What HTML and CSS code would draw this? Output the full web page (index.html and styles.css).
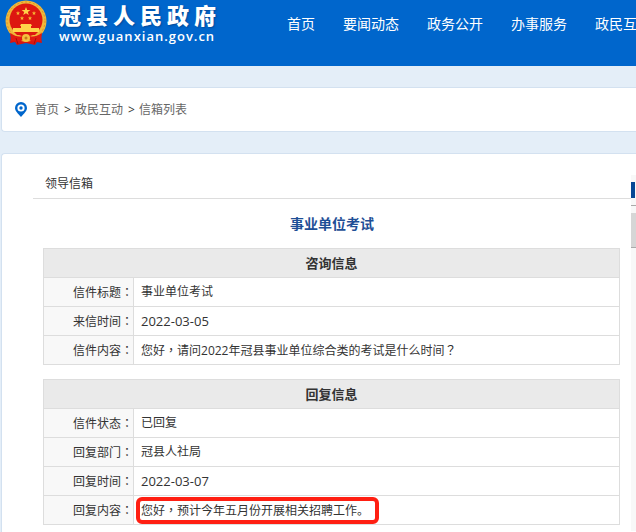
FILE: index.html
```html
<!DOCTYPE html>
<html lang="zh-CN">
<head>
  <meta charset="UTF-8" />
  <meta name="viewport" content="width=device-width, initial-scale=1" />
  <title>领导信箱 - 冠县人民政府</title>
  <link rel="stylesheet" href="styles.css">
</head>
<body>

  <header class="topo">
    <a href="#" class="logo">
      <svg class="emblem" viewBox="0 0 42 46" aria-hidden="true">
        <path d="M7 31 L5 43 L10 42 L12 45 L21 43 L30 45 L32 42 L37 43 L35 31 Z" fill="#d8150f"/>
        <circle cx="21" cy="21" r="20.5" fill="#f0b83a"/>
        <circle cx="21" cy="21" r="19" fill="none" stroke="#d9912a" stroke-width="1" stroke-dasharray="2 2"/>
        <circle cx="21" cy="20" r="16.5" fill="#dd1710"/>
        <path d="M21 7l1.2 3h3.2l-2.6 2 1 3.1-2.8-1.9-2.8 1.9 1-3.1-2.6-2h3.2z" fill="#ffd34a"/>
        <path d="M13 11l.6 1.4 1.5.1-1.2 1 .4 1.5-1.3-.8-1.3.8.4-1.5-1.2-1 1.5-.1zM29 11l.6 1.4 1.5.1-1.2 1 .4 1.5-1.3-.8-1.3.8.4-1.5-1.2-1 1.5-.1zM17 16l.6 1.4 1.5.1-1.2 1 .4 1.5-1.3-.8-1.3.8.4-1.5-1.2-1 1.5-.1zM25 16l.6 1.4 1.5.1-1.2 1 .4 1.5-1.3-.8-1.3.8.4-1.5-1.2-1 1.5-.1z" fill="#f7b733"/>
        <path d="M16 24h10l1 2h-1v2h8v4H8v-4h8v-2h-1z" fill="#ffd34a"/>
        <path d="M9 32h24l-3 3H12z" fill="#dd1710"/>
        <path d="M5 33q8 5 12 3l4-2 4 2q4 2 12-3l-1 8q-8 2-12-1l-3-1-3 1q-4 3-12 1z" fill="#e01a12"/>
        <circle cx="21" cy="38" r="4" fill="#f4c13d"/>
        <circle cx="21" cy="38" r="1.5" fill="#c9781d"/>
        <path d="M11 38l2 6M31 38l-2 6" stroke="#a80d0a" stroke-width="1"/>
      </svg>
      <span class="logo-text">
        <strong>冠县人民政府</strong>
        <span class="site">www.guanxian.gov.cn</span>
      </span>
    </a>
    <nav class="menu">
      <a href="#">首页</a>
      <a href="#">要闻动态</a>
      <a href="#">政务公开</a>
      <a href="#">办事服务</a>
      <a href="#">政民互动</a>
    </nav>
  </header>

  <nav class="crumb">
    <svg class="pin" viewBox="0 0 12 15" aria-hidden="true">
      <path d="M6 0a6 6 0 0 1 6 6c0 3-3 5.500-6 9C3 11.500 0 9 0 6a6 6 0 0 1 6-6z" fill="#0066cc"/>
      <circle cx="6" cy="6" r="3.600" fill="#fff"/>
      <circle cx="6" cy="6" r="1.700" fill="#0066cc"/>
    </svg>
    <a href="#">首页</a>
    <span>&gt;</span>
    <a href="#">政民互动</a>
    <span>&gt;</span>
    <a href="#">信箱列表</a>
  </nav>

  <div class="panel">
    <main class="content">
      <h2>领导信箱</h2>
      <h1>事业单位考试</h1>

      <table class="info">
        <colgroup><col class="label-col"><col></colgroup>
        <thead>
          <tr><th colspan="2">咨询信息</th></tr>
        </thead>
        <tbody>
          <tr><th scope="row">信件标题<i lang="zh-TW">：</i></th><td>事业单位考试</td></tr>
          <tr><th scope="row">来信时间<i lang="zh-TW">：</i></th><td><time>2022-03-05</time></td></tr>
          <tr><th scope="row">信件内容<i lang="zh-TW">：</i></th><td>您好<i lang="zh-TW">，</i>请问2022年冠县事业单位综合类的考试是什么时间<i lang="zh-TW">？</i></td></tr>
        </tbody>
      </table>

      <table class="info">
        <colgroup><col class="label-col"><col></colgroup>
        <thead>
          <tr><th colspan="2">回复信息</th></tr>
        </thead>
        <tbody>
          <tr><th scope="row">信件状态<i lang="zh-TW">：</i></th><td>已回复</td></tr>
          <tr><th scope="row">回复部门<i lang="zh-TW">：</i></th><td>冠县人社局</td></tr>
          <tr><th scope="row">回复时间<i lang="zh-TW">：</i></th><td><time>2022-03-07</time></td></tr>
          <tr><th scope="row">回复内容<i lang="zh-TW">：</i></th><td><span class="marked">您好<i lang="zh-TW">，</i>预计今年五月份开展相关招聘工作。</span></td></tr>
        </tbody>
      </table>
    </main>

    <aside class="side">
      <div class="side-title"></div>
      <div class="side-item"></div>
    </aside>
  </div>

</body>
</html>
```
FILE: styles.css
```css
* {
  box-sizing: border-box;
}

body {
  margin: 0;
  min-height: 100vh;
  display: flex;
  flex-direction: column;
  overflow-x: hidden;
  background: #e4eef8;
  color: #333;
  font-family: "Open Sans", "Noto Sans CJK SC", sans-serif;
  font-size: 12px;
  line-height: 18px;
}

a {
  color: inherit;
  text-decoration: none;
}

/* centred full-width punctuation */
i {
  font-family: "Noto Sans CJK TC", sans-serif;
  font-style: normal;
}

.topo {
  display: flex;
  align-items: flex-start;
  height: 66px;
  padding-left: 5px;
  overflow: hidden;
  background: #0066cc;
  color: #fff;
}

.logo {
  display: flex;
  flex: none;
  gap: 12px;
  width: 282px;
}

.emblem {
  width: 42px;
  height: 46px;
}

.logo-text {
  display: flex;
  flex-direction: column;
  padding-top: 2px;
}

.logo-text strong {
  font-size: 22px;
  font-weight: 900;
  line-height: 26px;
  letter-spacing: 5px;
  text-shadow: 1px 1px 2px #004a99;
}

.site {
  font-size: 13px;
  font-weight: 600;
  line-height: 16px;
  letter-spacing: 1px;
}

.menu {
  display: flex;
  gap: 28px;
  padding-top: 14px;
  font-size: 14px;
  line-height: 20px;
  white-space: nowrap;
}

.crumb {
  display: flex;
  align-items: center;
  gap: 5px;
  height: 45px;
  margin: 21px 0 0 1px;
  padding-left: 13px;
  background: #fff;
  border: 1px solid #d3e1f0;
  border-right: 0;
  border-radius: 4px 0 0 4px;
  color: #666;
}

.crumb span {
  width: 6px;
  color: #333;
}

.pin {
  width: 12px;
  height: 15px;
  margin-right: 3px;
}

.panel {
  display: grid;
  grid-template-columns: minmax(0, 1fr) 5px;
  flex: 1;
  margin: 21px 0 0 1px;
  padding-left: 31px;
  background: #fff;
  border: 1px solid #d3e1f0;
  border-width: 1px 0 0 1px;
  border-radius: 4px 0 0 0;
}

.content {
  padding-top: 15px;
}

.content h2 {
  margin: 0;
  padding: 5px 12px;
  border-bottom: 1px solid #ddd;
  font-size: 12px;
  font-weight: 400;
  line-height: 19px;
}

.content h1 {
  margin: 15px 0 14px;
  color: #1f4f96;
  font-size: 14px;
  line-height: 20px;
  text-align: center;
}

.info {
  width: calc(100% - 21px);
  margin: 0 11px 14px 10px;
  border-collapse: collapse;
  table-layout: fixed;
}

.label-col {
  width: 90px;
}

.info th,
.info td {
  height: 29px;
  padding: 0 7px;
  border: 1px solid #ddd;
  text-align: left;
}

.info thead th {
  background: #eaeaea;
  font-size: 13px;
  text-align: center;
}

.info tbody th {
  padding: 0;
  background: #f8f8f8;
  font-weight: 400;
  text-align: right;
}

.info time {
  font-size: 13px;
}

.marked {
  position: relative;
}

.marked::after {
  content: "";
  position: absolute;
  inset: -5px -10px -5px -5px;
  border: 4px solid #ff1f12;
  border-radius: 6px;
}

.side {
  margin: 21px 0 8px;
  background: #f8f8f8;
}

.side-title {
  height: 31px;
  padding-top: 7px;
  border-bottom: 1px solid #aaa;
}

.side-title::before {
  content: "";
  display: block;
  width: 4px;
  height: 16px;
  background: #074895;
}

.side-item {
  height: 35px;
  margin-top: 7px;
  background: #d6d6d6;
  border-bottom: 1px dashed #aaa;
}
```
